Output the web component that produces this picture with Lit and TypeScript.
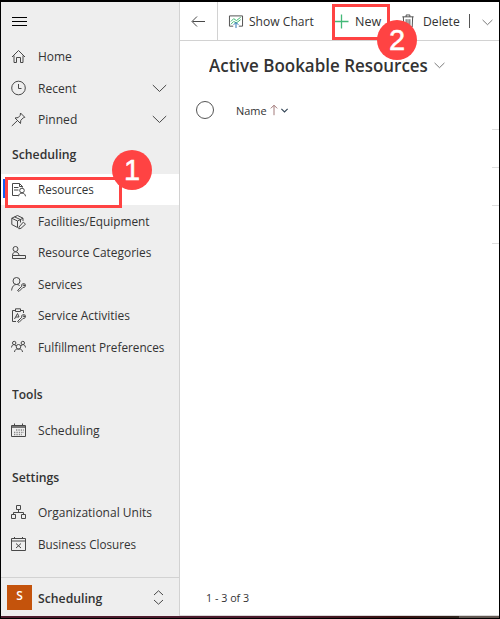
import { LitElement, html, css, svg, nothing } from "lit";
import { customElement, property } from "lit/decorators.js";

const icons: Record<string, unknown> = {
  home: svg`<path d="M1 8 7.5 1.500 14 8M3 6.500V13.500H5.500V8.500H9.500V13.500H12V6.500"/>`,
  clock: svg`<circle cx="7.5" cy="7" r="6.800"/><path d="M7.500 3V7.500H10.500"/>`,
  pin: svg`<path d="M9.500 1 13.800 5.300 12.300 5.800 9.800 8.300 9.500 11.500 4 6 7.200 5.600 9.200 3.400ZM6.500 8.500 .8 14"/>`,
  resources: svg`<path d="M7 13.500H1.500V1.500H8.500L11.500 4.500V5.500M8.500 1.500V4.500H11.500M3 5.500H7.500M3 8H7.500"/><circle cx="11" cy="8.500" r="2.300"/><path d="M7.500 14.300C7.800 10 14.200 10 14.500 14.300"/>`,
  box: svg`<path d="M.8 4.200 6.500 1.500 12 4.200 6.500 7ZM.8 4.200V10.500L6.500 13.500V7M12 4.200V7M3.500 2.900 9.500 5.600V8.500M8 13 12.300 8.100 14.500 10.200 10 14.300 7.800 14.800Z"/>`,
  category: svg`<circle cx="4.500" cy="4" r="2.500"/><path d="M1.500 13.500V10.500C1.500 5.500 8 6 8 10.500H14.500V13.500ZM1.500 10.500H8"/>`,
  service: svg`<circle cx="5.500" cy="4" r="3.500"/><path d="M.6 13.500C1 9.500 3 7.500 5.500 7.500 7 7.500 8 8 8.800 9M6.500 13.500 10.800 9.200C10 7.200 12 6 13.700 6.800L12.300 8.200 13 9 14.400 7.600C15 9.500 13.500 10.800 12 10.400L8 14.400Z"/>`,
  activity: svg`<path d="M5 13.500H1.500V2.500H4.500M9.500 2.500H12.500V5M4.500 .8H9.500V3.500H4.500ZM3.500 11 6.500 5.500 8 9M5 9H8M6.500 13.500 10.800 9.200C10 7.200 12 6 13.700 6.800L12.300 8.200 13 9 14.400 7.600C15 9.500 13.500 10.800 12 10.400L8 14.400Z"/>`,
  people: svg`<circle cx="3.200" cy="3" r="1.700"/><circle cx="11.800" cy="3" r="1.700"/><circle cx="7.500" cy="6.800" r="2.300"/><path d="M.5 7.500C.8 5 2 4.500 3.500 4.700L5.500 6M14.500 7.500C14.200 5 13 4.500 11.500 4.700L9.500 6M3.500 12C4 9 5.500 9 7.500 9S11 9 11.500 12"/>`,
  calendar: svg`<path d="M.5 2.500H14.500V13.500H.5Z"/><path stroke="#777" stroke-width="2" d="M1 4H14"/><path d="M3.500 .5V2.500M11.500 .5V2.500"/><path stroke="#888" stroke-width="1.300" d="M5 7H13M3 9.300H13M3 11.500H11" stroke-dasharray="1.300 1.100"/>`,
  org: svg`<path d="M5.500 .5H9.500V4.500H5.500ZM.5 9.500H4.500V13.500H.5ZM10.500 9.500H14.500V13.500H10.500ZM7.500 4.500V7.500M2.500 9.500V7.500H12.500V9.500"/>`,
  closure: svg`<path d="M.5 1.500H14.500V13.500H.5ZM1 4H14M3.500 0V2M11.500 0V2M5 6.500 10 11M10 6.500 5 11"/>`,
  chevron: svg`<path d="M.8 4 7.500 10.500 14.200 4"/>`,
  updown: svg`<path d="M3 5 7.500 .8 12 5M3 10 7.500 14.200 12 10"/>`,
  menu: svg`<path d="M0 3.500H15M0 7.500H15M0 11.500H15"/>`,
  back: svg`<path d="M14 7.500H1.500M6 2.500 1 7.500 6 12.500"/>`,
  chart: svg`<path d="M4.500 12.500H.5V1.500H14.500V12.500H10.500"/><path stroke="#35b56b" d="M2 7.500 5 4.500 8 6.500 12.500 3M2 10.500 5 7.500 8 9 12.500 5.500"/><path stroke="#1f6cb0" d="M7.500 14.500V9M5 11 7.500 8.500 10 11"/>`,
  plus: svg`<path stroke="#43b978" stroke-width="1.300" d="M7.500 .5V14.500M.5 7.500H14.500"/>`,
  trash: svg`<path d="M1.500 2.500H13.500M5.500 2.500V.5H9.500V2.500M2.500 2.500 3 13.500H12L12.500 2.500M5.500 5V11.500M7.500 5V11.500M9.500 5V11.500"/>`,
  up: svg`<path d="M7.500 14V2M3.500 5.500 7.500 1.500 11.500 5.500"/>`,
};

@customElement("ui-icon")
class UiIcon extends LitElement {
  @property() name = "";
  static styles = css`
    :host { display: block; flex: none; width: 15px; height: 15px; color: #484848; }
    svg { display: block; width: 100%; height: 100%; overflow: visible; fill: none; stroke: currentColor; }
  `;
  render() {
    return html`<svg viewBox="0 0 15 15">${icons[this.name] ?? nothing}</svg>`;
  }
}

/* A single-line label condensed or widened to a given width. */
@customElement("ui-label")
class UiLabel extends LitElement {
  @property() text = "";
  @property({ type: Number }) width = 0;
  static styles = css`
    :host { display: block; flex: none; white-space: nowrap; }
    span { display: inline-block; transform-origin: 0 50%; }
  `;
  render() {
    return html`<span>${this.text}</span>`;
  }
  updated() {
    const span = this.renderRoot.querySelector("span")!;
    this.style.width = `${this.width}px`;
    span.style.transform = `scaleX(${this.width / span.offsetWidth})`;
  }
}

type Item = { icon: string; text: string; width: number; more?: boolean; active?: boolean };

const top: Item[] = [
  { icon: "home", text: "Home", width: 34 },
  { icon: "clock", text: "Recent", width: 38, more: true },
  { icon: "pin", text: "Pinned", width: 39, more: true },
];
const scheduling: Item[] = [
  { icon: "resources", text: "Resources", width: 55.5, active: true },
  { icon: "box", text: "Facilities/Equipment", width: 112 },
  { icon: "category", text: "Resource Categories", width: 113.5 },
  { icon: "service", text: "Services", width: 44 },
  { icon: "activity", text: "Service Activities", width: 92 },
  { icon: "people", text: "Fulfillment Preferences", width: 126.5 },
];
const tools: Item[] = [{ icon: "calendar", text: "Scheduling", width: 61.5 }];
const settings: Item[] = [
  { icon: "org", text: "Organizational Units", width: 113.5 },
  { icon: "closure", text: "Business Closures", width: 98 },
];

@customElement("app-root")
class AppRoot extends LitElement {
  static styles = css`
    * { box-sizing: border-box; }
    :host {
      display: grid; grid-template-columns: 179px 1fr; grid-template-rows: 614px 2px;
      position: relative;
      width: 500px; height: 619px; box-sizing: border-box; overflow: hidden;
      border: solid #000; border-width: 2px 1px 1px;
      background: #fff; color: #333; font: 13px/18px "Open Sans", "Noto Sans", sans-serif;
    }
    nav { display: flex; flex-direction: column; background: #eee; border-right: 1px solid #d2d2d2; }
    .menu { height: 39px; padding: 12px 11px; }
    .menu ui-icon { color: #000; }
    .row { display: flex; align-items: center; height: 31.6px; flex: none; padding-left: 10px; gap: 12.4px; }
    .row.active { background: #fff; }
    .row ui-label { margin-top: -1px; }
    .row .more { margin: 0 12px 0 auto; }
    h3 { margin: 0; flex: none; padding: 0 0 2px 11.4px; height: 38px; display: flex; align-items: center; font-size: 13px; font-weight: 570; }
    .groupgap { height: 13px; flex: none; }
    .footer { margin-top: auto; display: flex; align-items: center; height: 39px; padding-left: 6px; gap: 6.4px; border-top: 1px solid #d2d2d2; font-weight: 570; }
    .footer ui-label { margin-top: 1px; }
    .avatar { width: 25px; height: 25px; background: #c4530c; color: #fff; text-align: center; line-height: 22px; font-size: 12px; font-weight: 600; }
    .footer .switch { margin: 0 12.6px 0 auto; }
    main { display: flex; flex-direction: column; min-width: 0; border-bottom: 1px solid #d8d8d8; }
    .bar { display: flex; align-items: center; height: 39px; flex: none; border-bottom: 1px solid #d2d2d2; }
    .bar ui-label { margin-top: -1px; }
    .back { width: 38px; height: 38px; flex: none; display: flex; align-items: center; justify-content: center; border-right: 1px solid #d2d2d2; }
    .bar .chart { width: 14px; margin: 0 6px 0 11px; }
    .bar .plus { margin: 0 6px 0 20px; }
    .bar .trash { width: 14px; margin: 0 8px 0 19.5px; }
    .sep { width: 1px; height: 14px; margin: 0 12px 0 10px; background: #555; flex: none; }
    .bar .down { width: 11px; height: 11px; margin-top: 2px; }
    .title { display: flex; align-items: center; height: 48px; padding-left: 29px; gap: 6px; font-size: 18px; line-height: 24px; font-weight: 570; }
    .title ui-icon { width: 11px; height: 11px; }
    .head { display: flex; align-items: center; height: 42px; padding-left: 16px; font-size: 11.5px; font-weight: 500; }
    .head ui-label { margin-top: 2px; }
    .check { width: 18px; height: 18px; border: 1px solid #555; border-radius: 50%; margin-right: 22px; }
    .head .up { width: 12px; height: 12px; margin: 0 1px 0 1px; color: #8a5858; }
    .head .small { width: 7px; height: 7px; stroke-width: 2.4; color: #345; }
    .lines { align-self: flex-end; display: flex; flex-direction: column; gap: 37px; margin-top: -2px; }
    .lines i { display: block; width: 7px; height: 1px; background: #ddd; }
    .count { margin-top: auto; height: 34px; padding: 8px 0 0 26px; font-size: 11.5px; line-height: 18px; }
    .strip { grid-column: 1 / -1; background: linear-gradient(90deg, #4d1b2c 0 58%, #38100f 80%, #30231c 92%, #625650 92%); }
    .mark { position: absolute; border: 3px solid #ff4343; }
    .one { left: 4px; top: 175px; width: 117px; height: 31px; }
    .two { left: 331px; top: 2px; width: 58px; height: 36px; }
    .badge { position: absolute; width: 40px; height: 40px; border-radius: 50%; background: #ff4343; color: #fff; text-align: center; font: 29px/40px "Liberation Sans", Arial, sans-serif; -webkit-text-stroke: .5px #fff; }
    .b1 { left: 111px; top: 148px; }
    .b2 { left: 376px; top: 18px; }
    .sel { position: absolute; left: 2px; top: 177px; width: 3px; height: 19px; background: #1160f5; }
  `;
  private rows(items: Item[]) {
    return items.map(
      (i) => html`<div class="row ${i.active ? "active" : ""}">
        <ui-icon name=${i.icon}></ui-icon>
        <ui-label text=${i.text} width=${i.width}></ui-label>
        ${i.more ? html`<ui-icon class="more" name="chevron"></ui-icon>` : nothing}
      </div>`
    );
  }
  render() {
    return html`
      <nav>
        <div class="menu"><ui-icon name="menu"></ui-icon></div>
        ${this.rows(top)}
        <h3><ui-label text="Scheduling" width="64"></ui-label></h3>
        ${this.rows(scheduling)}
        <div class="groupgap"></div>
        <h3><ui-label text="Tools" width="30.5"></ui-label></h3>
        ${this.rows(tools)}
        <div class="groupgap"></div>
        <h3><ui-label text="Settings" width="47"></ui-label></h3>
        ${this.rows(settings)}
        <div class="footer">
          <div class="avatar">S</div>
          <ui-label text="Scheduling" width="64"></ui-label>
          <ui-icon class="switch" name="updown"></ui-icon>
        </div>
      </nav>
      <main>
        <div class="bar">
          <div class="back"><ui-icon name="back"></ui-icon></div>
          <ui-icon class="chart" name="chart"></ui-icon>
          <ui-label text="Show Chart" width="65"></ui-label>
          <ui-icon class="plus" name="plus"></ui-icon>
          <ui-label text="New" width="26"></ui-label>
          <ui-icon class="trash" name="trash"></ui-icon>
          <ui-label text="Delete" width="36.5"></ui-label>
          <div class="sep"></div>
          <ui-icon class="down" name="chevron"></ui-icon>
        </div>
        <div class="title">
          <ui-label text="Active Bookable Resources" width="218.5"></ui-label>
          <ui-icon name="chevron"></ui-icon>
        </div>
        <div class="head">
          <div class="check"></div>
          <ui-label text="Name" width="30.5"></ui-label>
          <ui-icon class="up" name="up"></ui-icon>
          <ui-icon class="small" name="chevron"></ui-icon>
        </div>
        <div class="lines"><i></i><i></i><i></i><i></i></div>
        <div class="count"><ui-label text="1 - 3 of 3" width="43"></ui-label></div>
      </main>
      <div class="strip"></div>
      <div class="sel"></div>
      <div class="mark one"></div>
      <div class="badge b1">1</div>
      <div class="mark two"></div>
      <div class="badge b2">2</div>
    `;
  }
}
